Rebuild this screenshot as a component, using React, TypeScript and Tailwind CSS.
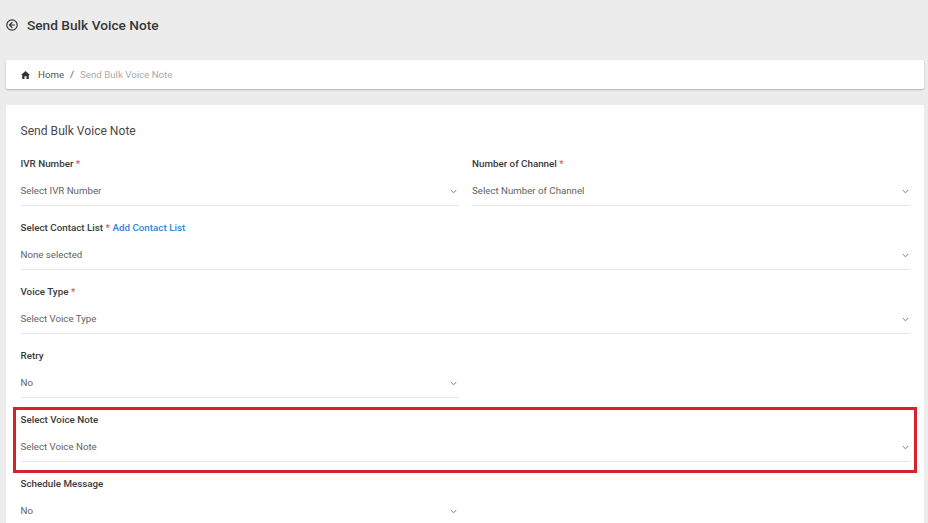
import React from "react";

const font = { fontFamily: "Roboto, sans-serif" };

function Chevron() {
  return (
    <svg width="7" height="5" viewBox="0 0 7 5" fill="none" stroke="#777" strokeWidth="1" className="shrink-0">
      <path d="M0.7 1 L3.5 3.8 L6.3 1" />
    </svg>
  );
}

function Field({ label, value, required, link, full, highlight }: { label: string; value: string; required?: boolean; link?: string; full?: boolean; highlight?: boolean }) {
  return (
    <div className={`relative ${full ? "col-span-2" : ""}`}>
      {highlight && (
        <div className="absolute left-[-8px] right-[-7px] top-[-5px] h-[66px] border-[3px] border-[#d9202f] pointer-events-none" />
      )}
      <div className="h-[16px] flex items-center gap-[2.5px] text-[9.8px] font-medium text-[#3a3a3a] whitespace-nowrap -ml-[0.5px]">
        <span>{label}</span>
        {required && <span className="text-[#e0555a]">*</span>}
        {link && <span className="text-[#2f86d6]">{link}</span>}
      </div>
      <div className="h-[34px] flex items-center justify-between border-b border-[#e6e6e6] pt-[6px] pr-[1.5px] text-[9.7px] text-[#636363]">
        <span className="-ml-[0.5px]">{value}</span>
        <Chevron />
      </div>
    </div>
  );
}

export default function App() {
  return (
    <div className="h-[523px] overflow-hidden bg-[#ececec] px-[6px] pr-[4px]" style={font}>
      <div className="h-[50px] flex items-center gap-[9px]">
        <svg width="12" height="12" viewBox="0 0 24 24" fill="none" stroke="#333" strokeWidth="2.4" strokeLinecap="round" strokeLinejoin="round">
          <circle cx="12" cy="12" r="10.4" />
          <path d="M12 7 L7 12 L12 17 M7 12 H17" />
        </svg>
        <h1 className="text-[13.7px] font-medium text-[#383838]">Send Bulk Voice Note</h1>
      </div>
      <div className="mt-[10px] h-[29px] flex items-center bg-white rounded-[2px] shadow-[0_1px_2px_rgba(0,0,0,0.25)] pl-[15px] pt-[1px] text-[9.7px]">
        <svg width="9" height="8" viewBox="0 0 18 16" fill="#333">
          <path d="M9 0 L18 8 L15.6 8 L15.6 16 L11 16 L11 10.5 L7 10.5 L7 16 L2.4 16 L2.4 8 L0 8 Z" />
        </svg>
        <span className="ml-[8px] text-[#555]">Home</span>
        <span className="ml-[6px] text-[#555]">/</span>
        <span className="ml-[6px] text-[#aaaaaa]">Send Bulk Voice Note</span>
      </div>
      <div className="mt-[16px] h-[500px] bg-white rounded-[2px] pl-[15px] pr-[14px] pt-[18px]">
        <h2 className="h-[16px] flex items-center text-[12.1px] text-[#4a4a4a] -ml-[0.5px]">Send Bulk Voice Note</h2>
        <div className="mt-[17px] grid grid-cols-2 gap-x-[14px] gap-y-[14px]">
          <Field label="IVR Number" value="Select IVR Number" required />
          <Field label="Number of Channel" value="Select Number of Channel" required />
          <Field label="Select Contact List" value="None selected" required link="Add Contact List" full />
          <Field label="Voice Type" value="Select Voice Type" required full />
          <Field label="Retry" value="No" />
          <div />
          <Field label="Select Voice Note" value="Select Voice Note" full highlight />
          <Field label="Schedule Message" value="No" />
        </div>
      </div>
    </div>
  );
}
